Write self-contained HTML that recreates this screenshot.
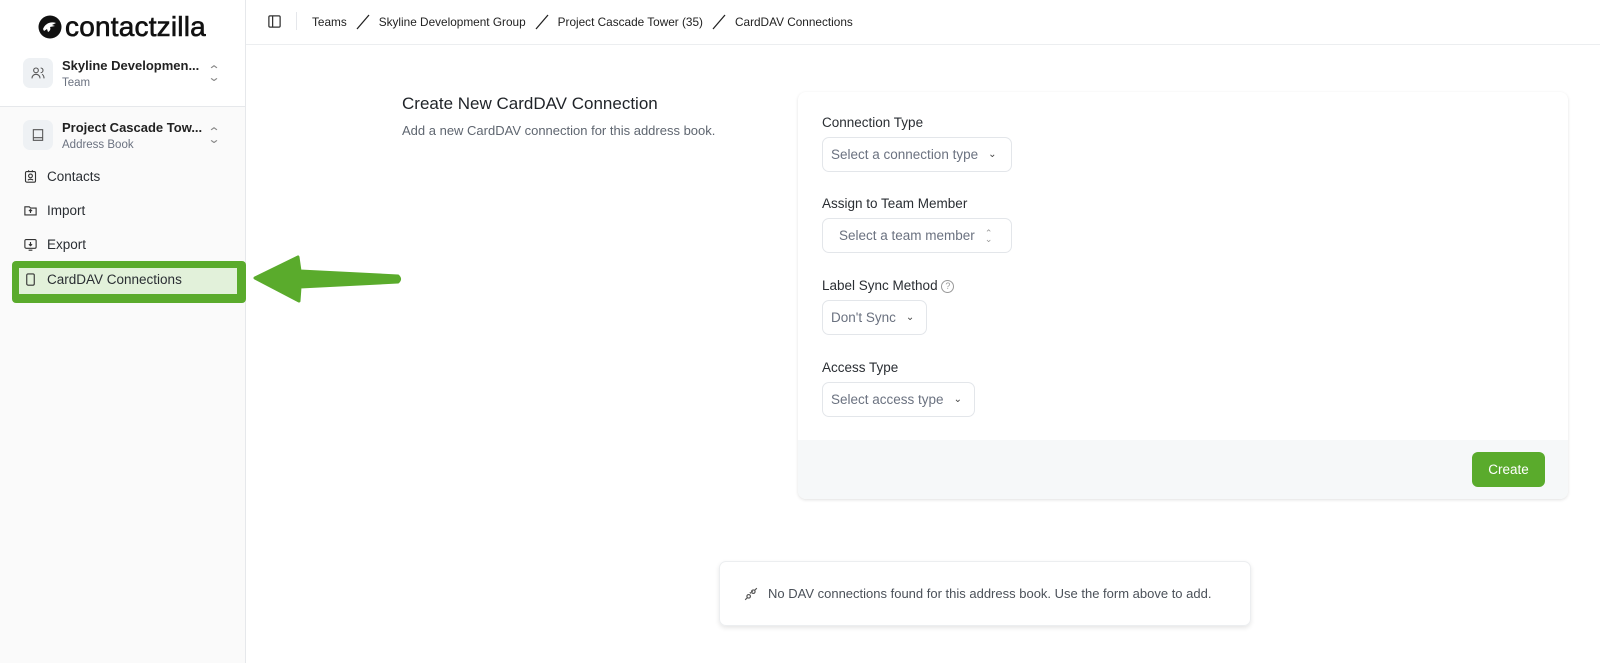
<!DOCTYPE html>
<html><head><meta charset="utf-8"><style>
*{box-sizing:border-box;margin:0;padding:0}
body{width:1600px;height:663px;overflow:hidden;background:#fff;font-family:"Liberation Sans",sans-serif;color:#1f2328;position:relative}
.abs{position:absolute}
.sb{left:0;top:0;width:246px;height:663px;background:#fafafa;border-right:1px solid #e6e8eb}
.sbtop{left:0;top:0;width:245px;height:107px;background:#fff;border-bottom:1px solid #e6e8eb}
.ibox{width:30px;height:30px;border-radius:7px;background:#eef1f4;display:flex;align-items:center;justify-content:center}
.t1{font-size:13px;font-weight:bold;color:#222}
.t2{font-size:11.5px;color:#6b7280}
.nav{font-size:13.5px;color:#2a2e33;display:flex;align-items:center;gap:9px;left:23px}
.lbl{font-size:13.5px;color:#2a2e33;left:822px}
.sel{left:822px;height:35px;border:1px solid #e3e6ea;border-radius:7px;font-size:13.5px;color:#6b7280;display:flex;align-items:center;padding-left:8px;gap:10px}
.chev{position:absolute;left:209px;color:#888;font-size:12px;line-height:7px;transform:scaleX(1.3)}
</style></head><body>
<div class="abs sb"></div>
<div class="abs sbtop"></div>
<div class="abs" style="left:38px;top:11px;display:flex;align-items:center;gap:3px">
<svg width="24" height="24" viewBox="0 0 24 24"><circle cx="12" cy="12" r="11.5" fill="#111"/><path d="M5 14c2-5 7-8 13-6l-4 2 3 1-5 1c1 2 0 4-2 5l-1-3-3 2z" fill="#fff"/></svg>
<span style="font-size:28px;color:#111;letter-spacing:0.2px;-webkit-text-stroke:0.6px #111">contactzilla</span></div>
<div class="abs ibox" style="left:23px;top:58px"><svg width="16" height="16" viewBox="0 0 24 24" fill="none" stroke="#555" stroke-width="1.6"><circle cx="9" cy="8" r="3.5"/><path d="M3 20c0-4 3-6 6-6s6 2 6 6M16 4.5a3.5 3.5 0 010 7M18 14c2 1 3 3 3 6"/></svg></div>
<div class="abs t1" style="left:62px;top:58px">Skyline Developmen...</div>
<div class="abs t2" style="left:62px;top:77px">Team</div>
<div class="chev" style="top:67px">&#8963;<br>&#8964;</div>
<div class="abs ibox" style="left:23px;top:120px"><svg width="16" height="16" viewBox="0 0 24 24" fill="none" stroke="#555" stroke-width="1.6"><path d="M5 4h14v16H5zM5 16h14"/></svg></div>
<div class="abs t1" style="left:62px;top:120px">Project Cascade Tow...</div>
<div class="abs t2" style="left:62px;top:139px">Address Book</div>
<div class="chev" style="top:129px">&#8963;<br>&#8964;</div>
<div class="abs nav" style="top:169px"><svg width="15" height="15" viewBox="0 0 24 24" fill="none" stroke="#333" stroke-width="1.8"><rect x="4" y="4" width="16" height="17" rx="2"/><circle cx="12" cy="11" r="3"/><path d="M8 18c1-2 7-2 8 0M9 2v3M15 2v3"/></svg>Contacts</div>
<div class="abs nav" style="top:203px"><svg width="15" height="15" viewBox="0 0 24 24" fill="none" stroke="#333" stroke-width="1.8"><path d="M3 6h7l2 2h9v11H3z"/><path d="M12 16v-5M9.5 13l2.5-2.5 2.5 2.5"/></svg>Import</div>
<div class="abs nav" style="top:237px"><svg width="15" height="15" viewBox="0 0 24 24" fill="none" stroke="#333" stroke-width="1.8"><rect x="3" y="4" width="18" height="14" rx="2"/><path d="M12 8v6M9.5 11.5L12 14l2.5-2.5M9 21h6"/></svg>Export</div>
<div class="abs" style="left:12px;top:261px;width:234px;height:42px;background:#5aab2c;border-radius:4px"></div>
<div class="abs" style="left:19px;top:268px;width:218px;height:26px;background:#e2f1da"></div>
<div class="abs nav" style="top:272px"><svg width="15" height="15" viewBox="0 0 24 24" fill="none" stroke="#333" stroke-width="1.8"><rect x="6" y="3" width="12" height="18" rx="2"/><path d="M12 17h.01"/></svg>CardDAV Connections</div>
<svg class="abs" style="left:250px;top:250px" width="160" height="60" viewBox="0 0 160 60"><path d="M5 28L48 7L50 21L148 26Q151 29 148 32L50 37L49 51Z" fill="#5aab2c" stroke="#5aab2c" stroke-linejoin="round" stroke-width="3"/></svg>
<div class="abs" style="left:246px;top:44px;width:1354px;height:1px;background:#eceef0"></div>
<svg class="abs" style="left:267px;top:14px" width="15" height="15" viewBox="0 0 24 24" fill="none" stroke="#333" stroke-width="2"><rect x="3" y="3" width="18" height="18" rx="2"/><path d="M9 3v18"/></svg>
<div class="abs" style="left:296px;top:12px;width:1px;height:18px;background:#e5e7eb"></div>
<div class="abs" style="left:312px;top:14px;font-size:11.8px;color:#222;display:flex;gap:8px;align-items:center">Teams<svg width="16" height="16"><path d="M2 15L14 1" stroke="#222" stroke-width="1.3"/></svg>Skyline Development Group<svg width="16" height="16"><path d="M2 15L14 1" stroke="#222" stroke-width="1.3"/></svg>Project Cascade Tower (35)<svg width="16" height="16"><path d="M2 15L14 1" stroke="#222" stroke-width="1.3"/></svg>CardDAV Connections</div>
<div class="abs" style="left:402px;top:94px;font-size:17px;color:#1f2328">Create New CardDAV Connection</div>
<div class="abs" style="left:402px;top:123px;font-size:13px;color:#5f6670">Add a new CardDAV connection for this address book.</div>
<div class="abs" style="left:798px;top:92px;width:770px;height:407px;border-radius:8px;background:#fff;box-shadow:0 1px 3px rgba(0,0,0,.12);overflow:hidden"><div style="position:absolute;left:0;right:0;bottom:0;height:59px;background:#f6f8f9"></div></div>
<div class="abs lbl" style="top:115px">Connection Type</div>
<div class="abs sel" style="top:137px;width:190px">Select a connection type <span style="font-size:10px;color:#444">&#8964;</span></div>
<div class="abs lbl" style="top:196px">Assign to Team Member</div>
<div class="abs sel" style="top:218px;width:190px;padding-left:16px">Select a team member <span style="font-size:9px;color:#999;line-height:6px">&#8963;<br>&#8964;</span></div>
<div class="abs lbl" style="top:278px">Label Sync Method <span style="display:inline-block;width:13px;height:13px;border:1px solid #999;border-radius:50%;font-size:9px;color:#999;text-align:center;line-height:11px;vertical-align:middle">?</span></div>
<div class="abs sel" style="top:300px;width:105px">Don't Sync <span style="font-size:10px;color:#444">&#8964;</span></div>
<div class="abs lbl" style="top:360px">Access Type</div>
<div class="abs sel" style="top:382px;width:153px">Select access type <span style="font-size:10px;color:#444">&#8964;</span></div>
<div class="abs" style="left:1472px;top:452px;width:73px;height:35px;background:#5aab2c;border-radius:6px;color:#fff;font-size:13.5px;display:flex;align-items:center;justify-content:center">Create</div>
<div class="abs" style="left:719px;top:561px;width:532px;height:65px;border:1px solid #eceef0;border-radius:7px;box-shadow:0 2px 5px rgba(0,0,0,.1);display:flex;align-items:center;padding-left:24px;gap:10px;font-size:13px;color:#4b5159"><svg width="14" height="14" viewBox="0 0 24 24" fill="none" stroke="#555" stroke-width="2"><circle cx="8" cy="16" r="3"/><circle cx="16" cy="8" r="3"/><path d="M2 22l4-4M22 2l-4 4M10 9l2 2M13 6l2 2"/></svg>No DAV connections found for this address book. Use the form above to add.</div>
</body></html>
